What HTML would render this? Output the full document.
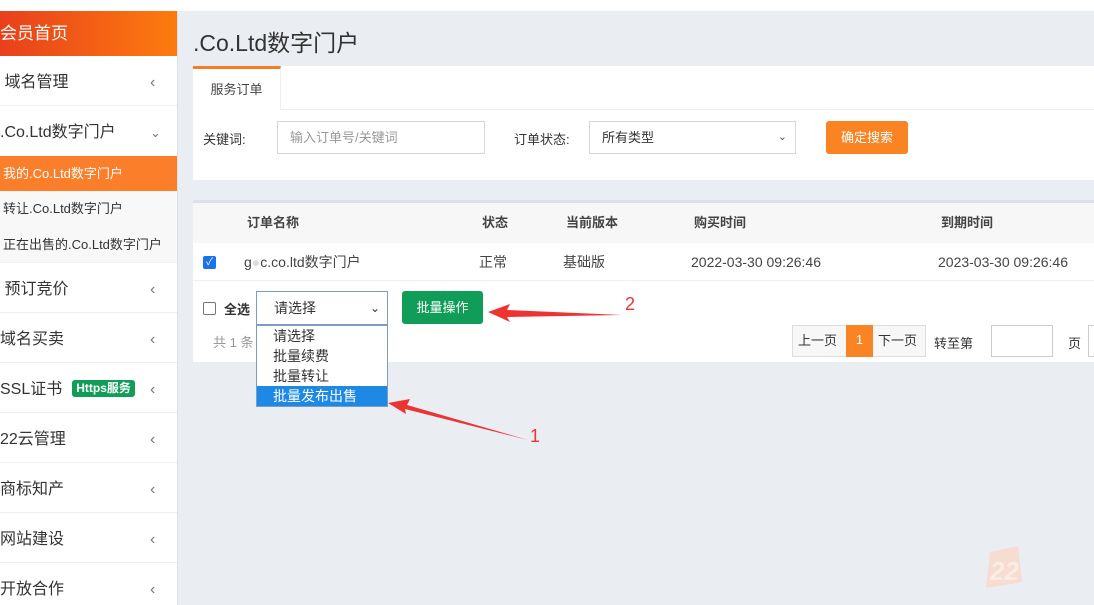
<!DOCTYPE html>
<html><head><meta charset="utf-8"><style>
*{margin:0;padding:0;box-sizing:border-box}
html,body{width:1094px;height:605px;overflow:hidden}
body{background:#eaedf2;font-family:"Liberation Sans","Noto Sans CJK SC",sans-serif;color:#333;position:relative}
.top{position:absolute;left:0;top:0;width:1094px;height:11px;background:#fff}
.side{position:absolute;left:0;top:11px;width:178px;height:594px;background:#fff;border-right:1px solid #dcdfe6;overflow:hidden}
.head{height:45px;background:linear-gradient(90deg,#e8401c,#fd7b0e);color:#fff;font-size:17px;line-height:45px}
.mi{height:50px;border-bottom:1px solid #eee;font-size:16px;line-height:46px;padding-top:4px;color:#333;position:relative}
.mi .ar{position:absolute;left:150px;top:4px;color:#777;font-size:16px}
.sub{height:36px;line-height:36px;font-size:13px;padding-left:3px;background:#f8f8f8;color:#333}
.sub.on{background:#fb7f2a;color:#fff;height:35px}
.badge{display:inline-block;background:#0f9d58;color:#fff;font-size:12px;font-weight:bold;line-height:17px;padding:0 4px;border-radius:3px;margin-left:10px;vertical-align:2px}
.abs{position:absolute}
.card{position:absolute;background:#fff}
.inp{position:absolute;border:1px solid #d6d6d6;background:#fff;font-size:13px;color:#999;line-height:31px;padding-left:12px}
</style></head><body>
<div class="top"></div>
<div class="side">
<div class="head">会员首页</div>
<div class="mi">&nbsp;域名管理<span class="ar">‹</span></div>
<div class="mi" style="border:none">.Co.Ltd数字门户<span class="ar" style="font-size:13px">&#8964;</span></div>
<div class="sub on">我的.Co.Ltd数字门户</div>
<div class="sub">转让.Co.Ltd数字门户</div>
<div class="sub" style="border-bottom:1px solid #eee">正在出售的.Co.Ltd数字门户</div>
<div class="mi">&nbsp;预订竞价<span class="ar">‹</span></div>
<div class="mi">域名买卖<span class="ar">‹</span></div>
<div class="mi">SSL证书<span class="badge">Https服务</span><span class="ar">‹</span></div>
<div class="mi">22云管理<span class="ar">‹</span></div>
<div class="mi">商标知产<span class="ar">‹</span></div>
<div class="mi">网站建设<span class="ar">‹</span></div>
<div class="mi">开放合作<span class="ar">‹</span></div>
</div>
<div class="abs" style="left:193px;top:24px;font-size:23px;color:#333">.Co.Ltd数字门户</div>
<div class="card" style="left:193px;top:66px;width:901px;height:114px">
<div class="abs" style="left:0;top:0;width:88px;height:44px;border-top:3px solid #f57f20;border-right:1px solid #eee;font-size:13px;line-height:41px;text-align:center;color:#444">服务订单</div>
<div class="abs" style="left:88px;top:43px;width:813px;height:1px;background:#eee"></div>
<div class="abs" style="left:10px;top:63px;font-size:13px">关键词:</div>
<div class="inp" style="left:84px;top:55px;width:208px;height:33px">输入订单号/关键词</div>
<div class="abs" style="left:321px;top:63px;font-size:13px">订单状态:</div>
<div class="inp" style="left:396px;top:55px;width:207px;height:33px;color:#333">所有类型<span style="position:absolute;right:8px;font-size:11px;color:#555">&#8964;</span></div>
<div class="abs" style="left:633px;top:55px;width:82px;height:33px;background:#fa8424;border-radius:3px;color:#fff;font-size:13px;line-height:33px;text-align:center">确定搜索</div>
</div>
<div class="card" style="left:193px;top:200px;width:901px;height:162px;border-top:3px solid #dde0e6">
<div class="abs" style="left:0;top:0;width:901px;height:40px;background:#f7f7f7;font-size:13px;font-weight:bold;color:#444;line-height:40px">
<span class="abs" style="left:54px">订单名称</span><span class="abs" style="left:289px">状态</span><span class="abs" style="left:373px">当前版本</span><span class="abs" style="left:501px">购买时间</span><span class="abs" style="left:748px">到期时间</span></div>
<div class="abs" style="left:0;top:40px;width:901px;height:38px;border-bottom:1px solid #eee;font-size:14px;line-height:38px;color:#444">
<span class="abs" style="left:10px;top:13px;width:13px;height:13px;background:#1a73e8;border-radius:2px;color:#fff;font-size:10px;line-height:13px;text-align:center">✓</span>
<span class="abs" style="left:51px">g<span style="color:#ddd">●</span>c.co.ltd数字门户</span><span class="abs" style="left:286px">正常</span><span class="abs" style="left:370px">基础版</span><span class="abs" style="left:498px">2022-03-30 09:26:46</span><span class="abs" style="left:745px">2023-03-30 09:26:46</span></div>
<span class="abs" style="left:10px;top:99px;width:13px;height:13px;border:1px solid #777;border-radius:2px"></span>
<span class="abs" style="left:31px;top:96px;font-size:13px;font-weight:bold">全选</span>
<div class="abs" style="left:20px;top:129px;font-size:13px;color:#999">共 1 条</div>
<div class="abs" style="left:209px;top:88px;width:81px;height:33px;background:#0f9d58;border-radius:3px;color:#fff;font-size:13px;line-height:33px;text-align:center">批量操作</div>
<div class="abs" style="left:599px;top:122px;width:134px;height:32px;border:1px solid #ddd;background:#f7f7f7;font-size:13px;line-height:30px"><span class="abs" style="left:5px">上一页</span><span class="abs" style="left:53px;top:-1px;width:27px;height:32px;background:#fa8424;color:#fff;text-align:center">1</span><span class="abs" style="left:85px">下一页</span></div>
<div class="abs" style="left:741px;top:130px;font-size:13px">转至第</div>
<div class="abs" style="left:798px;top:122px;width:62px;height:32px;border:1px solid #ccc"></div>
<div class="abs" style="left:875px;top:130px;font-size:13px">页</div>
<div class="abs" style="left:895px;top:122px;width:6px;height:32px;border:1px solid #ccc;border-right:none"></div>
</div>
<div class="abs" style="left:256px;top:291px;width:132px;height:34px;border:1px solid #7a9cc6;background:#fff;font-size:14px;line-height:32px;padding-left:17px">请选择<span style="position:absolute;right:7px;font-size:12px">&#8964;</span></div>
<div class="abs" style="left:256px;top:325px;width:132px;height:82px;border:1px solid #7a9cc6;background:#fff;font-size:14px;line-height:20px">
<div style="padding-left:16px">请选择</div><div style="padding-left:16px">批量续费</div><div style="padding-left:16px">批量转让</div><div style="padding-left:16px;background:#1e88e5;color:#fff">批量发布出售</div></div>
<svg class="abs" style="left:0;top:0" width="1094" height="605">
<polygon points="488,312 510,304 507,310 622,315 507,317 510,322" fill="#ee3333"/>
<polygon points="388,403 410,399 407,405 528,440 405,409 406,414" fill="#ee3333"/>
<text x="625" y="310" fill="#ee3333" font-size="18" font-family="Liberation Sans">2</text>
<text x="530" y="442" fill="#ee3333" font-size="18" font-family="Liberation Sans">1</text>
<polygon points="990,552 1018,546 1022,582 986,588" fill="#f7dcd2"/>
<text x="990" y="580" fill="#fbece4" font-size="26" font-weight="bold" font-style="italic" font-family="Liberation Sans">22</text>
</svg>
</body></html>
